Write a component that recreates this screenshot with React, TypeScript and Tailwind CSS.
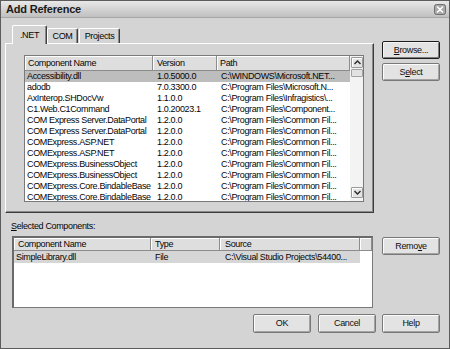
import React from 'react';

type RefRow = [string, string, string];

const references: RefRow[] = [
    ['Accessibility.dll', '1.0.5000.0', 'C:\\WINDOWS\\Microsoft.NET...'],
    ['adodb', '7.0.3300.0', 'C:\\Program Files\\Microsoft.N...'],
    ['AxInterop.SHDocVw', '1.1.0.0', 'C:\\Program Files\\Infragistics\\...'],
    ['C1.Web.C1Command', '1.0.20023.1', 'C:\\Program Files\\Component...'],
    ['COM Express Server.DataPortal', '1.2.0.0', 'C:\\Program Files\\Common Fil...'],
    ['COM Express Server.DataPortal', '1.2.0.0', 'C:\\Program Files\\Common Fil...'],
    ['COMExpress.ASP.NET', '1.2.0.0', 'C:\\Program Files\\Common Fil...'],
    ['COMExpress.ASP.NET', '1.2.0.0', 'C:\\Program Files\\Common Fil...'],
    ['COMExpress.BusinessObject', '1.2.0.0', 'C:\\Program Files\\Common Fil...'],
    ['COMExpress.BusinessObject', '1.2.0.0', 'C:\\Program Files\\Common Fil...'],
    ['COMExpress.Core.BindableBase', '1.2.0.0', 'C:\\Program Files\\Common Fil...'],
    ['COMExpress.Core.BindableBase', '1.2.0.0', 'C:\\Program Files\\Common Fil...'],
];

const headerCellClassName =
    'flex h-full shrink-0 items-center overflow-hidden whitespace-nowrap border-r border-[#8c8c8c] bg-[#dedede] shadow-[inset_1px_1px_0_#ffffff]';

const Button: React.FC<{ children: React.ReactNode; isDefault?: boolean; className?: string }> = ({
    children,
    isDefault = false,
    className = '',
}) => (
    <div
        className={`flex w-[58px] items-center justify-center rounded-[2px] border bg-[#e3e3e3] text-[#0e0e0e] ${
            isDefault
                ? 'border-[#1c1c1c] shadow-[inset_1px_1px_0_#f4f4f4,inset_-1px_-1px_0_#7c7c7c]'
                : 'border-[#787878] shadow-[inset_1px_1px_0_#fbfbfb,inset_-1px_-1px_0_#a4a4a4]'
        } ${className}`}
    >
        {children}
    </div>
);

const Tab: React.FC<{ label: string; active?: boolean; width: string }> = ({ label, active = false, width }) =>
    active ? (
        <div
            className={`relative z-10 -mb-px flex h-[19px] items-start justify-center rounded-t-[2px] border border-b-0 border-t-white border-l-white border-r-[#3c3c3c] bg-[#d4d4d4] pt-[4px] shadow-[inset_-1px_0_0_#8a8a8a] ${width}`}
        >
            {label}
        </div>
    ) : (
        <div
            className={`flex h-[15px] items-start justify-center rounded-t-[2px] border border-b-0 border-t-white border-l-white border-r-[#3c3c3c] bg-[#d4d4d4] pt-[2px] shadow-[inset_-1px_0_0_#8a8a8a] ${width}`}
        >
            {label}
        </div>
    );

const Chevron: React.FC<{ up?: boolean }> = ({ up = false }) => (
    <svg width="7" height="5" viewBox="0 0 7 5" aria-hidden="true">
        <path
            d={up ? 'M0.5 4 3.5 1 6.5 4' : 'M0.5 1 3.5 4 6.5 1'}
            fill="none"
            stroke="#2a2a2a"
            strokeWidth="1.4"
        />
    </svg>
);

const ScrollButton: React.FC<{ up?: boolean }> = ({ up = false }) => (
    <div className="flex h-[11px] w-[12px] items-center justify-center rounded-[1px] border border-[#9a9a9a] bg-[#e4e4e4] shadow-[inset_1px_1px_0_#ffffff]">
        <Chevron up={up} />
    </div>
);

const CloseButton = () => (
    <svg width="12" height="11" viewBox="0 0 12 11" aria-hidden="true">
        <rect x="0.5" y="0.5" width="11" height="10" rx="2" fill="#a9a9a9" stroke="#6e6e6e" />
        <path d="M3.5 3 8.5 8M8.5 3 3.5 8" stroke="#ffffff" strokeWidth="1.6" strokeLinecap="round" />
    </svg>
);

const ReferenceList = () => (
    <div className="flex h-[147px] w-[340px] overflow-hidden border border-[#7a7a7a] bg-white">
        <div className="w-[325px] overflow-hidden">
            <div className="flex h-[15px] border-b border-[#8c8c8c]">
                <div className={`${headerCellClassName} w-[128px] pl-[3px]`}>Component Name</div>
                <div className={`${headerCellClassName} w-[64px] pl-[4px]`}>Version</div>
                <div className={`${headerCellClassName} flex-1 pl-[3px]`}>Path</div>
            </div>
            {references.map(([name, version, path], index) => (
                <div
                    key={index}
                    className={`flex h-[11px] items-center whitespace-nowrap ${index === 0 ? 'bg-[#bdbdbd]' : ''}`}
                >
                    <div className="w-[128px] shrink-0 overflow-hidden pl-[2px]">{name}</div>
                    <div className="w-[64px] shrink-0 overflow-hidden pl-[4px]">{version}</div>
                    <div className="flex-1 overflow-hidden pl-[4px]">{path}</div>
                </div>
            ))}
        </div>
        <div className="flex w-[13px] flex-col justify-between bg-[#f3f3f3] pb-[3px] pt-[1px] pl-px">
            <div>
                <ScrollButton up />
                <div className="mt-[1px] h-[8px] w-[12px] rounded-[1px] border border-[#a2a2a2] bg-[#e2e2e2]" />
            </div>
            <ScrollButton />
        </div>
    </div>
);

const SelectedList = () => (
    <div className="h-[72px] w-[361px] overflow-hidden border border-[#7a7a7a] border-l-2 border-t-2 border-l-[#6a6a6a] border-t-[#6a6a6a] bg-white">
        <div className="flex h-[13px] border-b border-[#8c8c8c]">
            <div className={`${headerCellClassName} w-[137px] pl-[4px]`}>Component Name</div>
            <div className={`${headerCellClassName} w-[69px] pl-[4px]`}>Type</div>
            <div className={`${headerCellClassName} w-[140px] pl-[5px]`}>Source</div>
            <div className={`${headerCellClassName} flex-1`} />
        </div>
        <div className="flex h-[12px] w-[346px] items-center whitespace-nowrap bg-[#d6d6d6]">
            <div className="w-[137px] shrink-0 pl-[2px]">SimpleLibrary.dll</div>
            <div className="w-[69px] shrink-0 pl-[4px]">File</div>
            <div className="flex-1 overflow-hidden pl-[5px]">C:\Visual Studio Projects\54400...</div>
        </div>
    </div>
);

export default function App() {
    return (
        <div className="h-[349px] w-[450px] overflow-hidden border border-[#5c5c5c] bg-[#d4d4d4] font-['Liberation_Sans',Arial,sans-serif] text-[9px] leading-[11px] tracking-[-0.35px] text-[#050505]">
            <div className="flex h-[17px] items-center justify-between border-b border-[#a6a6a6] bg-gradient-to-b from-[#e8e8e8] to-[#c0c0c0] pl-[5px] pr-[3px]">
                <span className="text-[11px] font-bold tracking-[-0.2px] text-[#1a1a1a]">Add Reference</span>
                <CloseButton />
            </div>

            <div className="pl-[4px] pt-[7px]">
                <div className="flex">
                    <div className="w-[369px]">
                        <div className="flex h-[18px] items-end pl-[7px]">
                            <Tab label=".NET" active width="w-[35px]" />
                            <Tab label="COM" width="w-[31px]" />
                            <Tab label="Projects" width="w-[41px] ml-px" />
                        </div>
                        <div className="h-[170px] border border-t-white border-l-white border-r-[#3c3c3c] border-b-[#3c3c3c] pl-[18px] pt-[11px] shadow-[inset_-1px_-1px_0_#8a8a8a]">
                            <ReferenceList />
                        </div>
                    </div>
                    <div className="ml-[8px] flex w-[58px] flex-col">
                        <Button isDefault className="mt-[16px] h-[18px]">
                            <span>
                                <span className="underline underline-offset-1">B</span>rowse...
                            </span>
                        </Button>
                        <Button className="mt-[4px] h-[18px]">
                            <span>
                                S<span className="underline underline-offset-1">e</span>lect
                            </span>
                        </Button>
                    </div>
                </div>

                <div className="mt-[8px] h-[11px] pl-[6px]">
                    <span className="underline underline-offset-1">S</span>elected Components:
                </div>

                <div className="mt-[4px] flex">
                    <div className="ml-[7px]">
                        <SelectedList />
                    </div>
                    <Button className="ml-[9px] mt-[1px] h-[18px]">
                        <span>
                            Remo<span className="underline underline-offset-1">v</span>e
                        </span>
                    </Button>
                </div>

                <div className="mt-[6px] flex gap-[7px] pl-[248px]">
                    <Button className="h-[19px]">OK</Button>
                    <Button className="h-[19px]">Cancel</Button>
                    <Button className="h-[19px] ml-[-1px]">Help</Button>
                </div>
            </div>
        </div>
    );
}
